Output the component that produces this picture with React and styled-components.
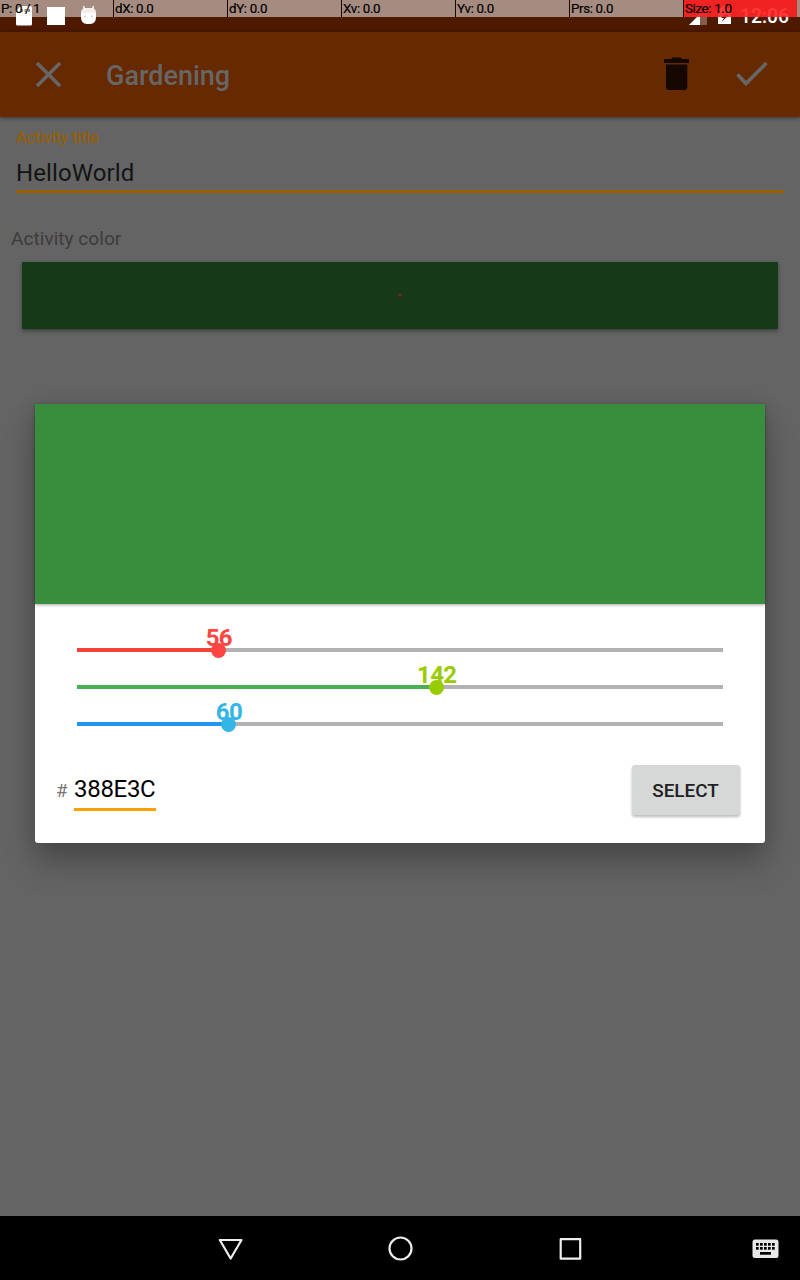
import React from 'react';
import styled, { createGlobalStyle } from 'styled-components';

const Global = createGlobalStyle`
  *, *::before, *::after { box-sizing: border-box; }
  body { margin: 0; background: #646464; font-family: Roboto, sans-serif; }
  svg { display: block; flex: none; }
`;

const Screen = styled.div`
  position: relative;
  display: flex;
  flex-direction: column;
  width: 800px;
  height: 1280px;
  overflow: hidden;
  background: #646464;
`;

const PointerBar = styled.div`
  position: absolute;
  inset: 0 0 auto 0;
  z-index: 3;
  display: flex;
  height: 17px;
  background: linear-gradient(to right, rgba(255, 255, 255, 0.5) 684px, transparent 684px, transparent 797px, rgba(255, 255, 255, 0.5) 797px);
`;

const PointerCell = styled.div`
  width: ${(p) => (p.$first ? 113 : 114)}px;
  padding-left: 1px;
  border-left: ${(p) => (p.$first ? 0 : 1)}px solid #1a0800;
  background: ${(p) => (p.$hot ? 'rgba(255, 36, 36, 0.91)' : 'transparent')};
  background-clip: padding-box;
  color: #000;
  font-size: 13.33px;
  line-height: 17px;
  letter-spacing: -0.35px;
  -webkit-text-stroke: 0.2px #000;
  white-space: pre;
`;

const StatusBar = styled.div`
  display: flex;
  justify-content: space-between;
  flex: none;
  height: 32px;
  padding: 0 11px 0 16px;
  background: #4d1900;
`;

const StatusGroup = styled.div`
  display: flex;
  align-items: flex-start;
`;

const Clock = styled.span`
  margin-left: 7px;
  padding-top: 6px;
  color: #fff;
  font-size: 19.3px;
  font-weight: 500;
  line-height: 22px;
`;

const AppBar = styled.header`
  display: flex;
  align-items: center;
  flex: none;
  height: 85px;
  padding: 0 32px;
  background: #662900;
  box-shadow: 0 1px 4px rgba(0, 0, 0, 0.45);
`;

const Title = styled.h1`
  flex: 1;
  margin: 3px 0 0 42px;
  color: #666;
  font-size: 27px;
  font-weight: 500;
  line-height: 32px;
`;

const TrashIcon = styled.svg`
  margin: 0 0 2px 1px;
`;

const Form = styled.main`
  flex: 1;
  padding: 11px 0 0;
`;

const FieldLabel = styled.div`
  margin-left: 16px;
  color: #996000;
  font-size: 16px;
  line-height: 19px;
  letter-spacing: -0.05px;
  -webkit-text-stroke: 0.2px #996000;
`;

const TitleField = styled.div`
  height: 46px;
  margin: 0 16px;
  padding-top: 12px;
  border-bottom: 3px solid #996000;
  color: #141414;
  font-size: 24px;
  line-height: 29px;
  letter-spacing: 0.1px;
`;

const SectionLabel = styled.div`
  margin: 35px 0 0 11px;
  color: #3c3c3c;
  font-size: 19px;
  line-height: 22px;
  letter-spacing: 0.05px;
`;

const Swatch = styled.div`
  display: flex;
  align-items: center;
  justify-content: center;
  height: 67px;
  margin: 12px 22px 0;
  padding-bottom: 1px;
  background: #163918;
  box-shadow: 0 2px 4px rgba(0, 0, 0, 0.38);
`;

const TouchPoint = styled.span`
  width: 2px;
  height: 2px;
  background: #e00000;
`;

const Dialog = styled.section`
  position: absolute;
  top: 404px;
  left: 35px;
  z-index: 2;
  width: 730px;
  height: 439px;
  border-radius: 0 0 3px 3px;
  background: #fff;
  box-shadow: 0 20px 32px rgba(0, 0, 0, 0.24), 0 4px 22px rgba(0, 0, 0, 0.12);
`;

const Preview = styled.div`
  height: 200px;
  background: #388e3c;
  box-shadow: 0 1px 3px rgba(0, 0, 0, 0.35);
`;

const Sliders = styled.div`
  display: flex;
  flex-direction: column;
  gap: 33px;
  padding: 44px 42px 0;
`;

const Track = styled.div`
  position: relative;
  height: 4px;
  background: linear-gradient(to right, ${(p) => p.$fill} ${(p) => p.$percent}%, #b2b2b2 ${(p) => p.$percent}%);
`;

const Thumb = styled.div`
  position: absolute;
  top: -5px;
  left: ${(p) => p.$percent}%;
  width: 15px;
  height: 15px;
  margin-left: -8px;
  border-radius: 50%;
  background: ${(p) => p.$color};
`;

const Value = styled.span`
  position: absolute;
  bottom: 0;
  left: ${(p) => p.$percent}%;
  transform: translateX(-50%);
  color: ${(p) => p.$color};
  font-size: 24px;
  font-weight: 700;
  line-height: 28px;
  letter-spacing: -0.6px;
`;

const DialogFooter = styled.div`
  display: flex;
  align-items: flex-start;
  padding: 39px 25px 0 21px;
`;

const Hash = styled.span`
  width: 18px;
  padding-top: 15px;
  color: #777;
  font-size: 18.67px;
  line-height: 22px;
`;

const HexField = styled.div`
  width: 82px;
  height: 46px;
  padding-top: 10px;
  border-bottom: 3px solid #ffa000;
  color: #000;
  font-size: 24px;
  line-height: 29px;
  letter-spacing: -0.3px;
`;

const SelectButton = styled.button`
  width: 108px;
  height: 50px;
  margin-left: auto;
  padding: 1px 1px 0 0;
  border: 0;
  border-radius: 3px;
  background: #d6d7d7;
  box-shadow: 0 2px 3px rgba(0, 0, 0, 0.28);
  color: #212121;
  font: 500 18.9px/50px Roboto, sans-serif;
`;

const NavBar = styled.nav`
  display: flex;
  align-items: center;
  flex: none;
  height: 64px;
  padding: 2px 21px 0 218px;
  background: #000;
`;

const NavIcon = styled.svg`
  width: 26px;
  height: 26px;
  margin-right: ${(p) => p.$after}px;
  fill: none;
  stroke: #eee;
  stroke-width: 2.2;
  stroke-linejoin: round;
`;

const KeyboardIcon = styled.svg`
  margin-left: auto;
`;

const pointerCells = ['P: 0 / 1', 'dX: 0.0', 'dY: 0.0', 'Xv: 0.0', 'Yv: 0.0', 'Prs: 0.0', 'Size: 1.0'];

const channels = [
  { value: 56, fill: '#f44336', thumb: '#ff4444' },
  { value: 142, fill: '#4caf50', thumb: '#99cc00' },
  { value: 60, fill: '#2196f3', thumb: '#33b5e5' },
];

function Channel({ value, fill, thumb }) {
  const percent = (value / 255) * 100;
  return (
    <Track $fill={fill} $percent={percent}>
      <Value $color={thumb} $percent={percent}>{value}</Value>
      <Thumb $color={thumb} $percent={percent} />
    </Track>
  );
}

export default function App() {
  return (
    <Screen>
      <Global />
      <PointerBar>
        {pointerCells.map((text, i) => (
          <PointerCell key={text} $first={i === 0} $hot={i === 6}>{text}</PointerCell>
        ))}
      </PointerBar>
      <StatusBar>
        <StatusGroup>
          <svg width="85" height="32" viewBox="0 0 85 32">
            <path fill="#fff" fillRule="evenodd" d="M5 6H14Q16 6 16 8V24Q16 25.500 14.500 25.500H1.500Q0 25.500 0 24V11ZM5 9V12H7V9ZM8.500 9V12H10.500V9ZM12 9V12H14V9Z" />
            <path fill="#fff" d="M31 7H49V25H31Z" />
            <path fill="#fff" d="M65 12H80V17Q80 24 74 24H71Q65 24 65 17Z" />
            <path fill="#e8dfda" d="M65 12Q66 8 69 8H76Q79 8 80 12V13H65Z" />
            <path stroke="#fff" strokeWidth="1.300" d="M67.500 6L68.500 9M77.500 6L76.500 9" />
            <circle cx="69" cy="16.300" r=".9" fill="#a68c80" />
            <circle cx="76" cy="16.300" r=".9" fill="#a68c80" />
          </svg>
        </StatusGroup>
        <StatusGroup>
          <svg width="44" height="32" viewBox="0 0 44 32">
            <path fill="#fff" fillOpacity=".3" d="M18 7V25H0Z" />
            <path fill="#fff" d="M11 14V25H0Z" />
            <path fill="#fff" fillRule="evenodd" d="M33 6H38V8H42V24H29V8H33ZM38 12L32 18H35L32.500 22L40 15H36Z" />
          </svg>
          <Clock>12:06</Clock>
        </StatusGroup>
      </StatusBar>
      <AppBar>
        <svg width="32" height="32" viewBox="0 0 32 32">
          <path stroke="#666" strokeWidth="3.500" d="M5 4L28 27M28 4L5 27" />
        </svg>
        <Title>Gardening</Title>
        <TrashIcon width="26" height="34" viewBox="0 0 26 34">
          <path fill="#140800" d="M0 2H7L8.500 .5H16.500L18 2H25V6H0ZM2 7.500H23.300V29.500Q23.300 33 20.300 33H5Q2 33 2 29.500Z" />
        </TrashIcon>
        <svg width="78" height="34" viewBox="0 0 78 34">
          <path fill="none" stroke="#666" strokeWidth="3.700" d="M47.500 16.500L56 25.500L76.500 5" />
        </svg>
      </AppBar>
      <Form>
        <FieldLabel>Activity title</FieldLabel>
        <TitleField>HelloWorld</TitleField>
        <SectionLabel>Activity color</SectionLabel>
        <Swatch><TouchPoint /></Swatch>
      </Form>
      <NavBar>
        <NavIcon $after={144} viewBox="0 0 26 26"><path d="M1.800 4H23.500L12.650 22.500Z" /></NavIcon>
        <NavIcon $after={144} viewBox="0 0 26 26"><circle cx="12.500" cy="12.500" r="11" /></NavIcon>
        <NavIcon $after={0} viewBox="0 0 26 26"><path d="M2.700 3.200H22.200V22.700H2.700Z" /></NavIcon>
        <KeyboardIcon width="27" height="20" viewBox="0 0 27 20">
          <rect x=".5" y=".5" width="26" height="18.500" rx="2.500" fill="#e8e8e8" />
          {[4, 8].map((y) => [4, 8, 12, 16, 20].map((x) => (
            <rect key={`${x}-${y}`} x={x} y={y} width="2.700" height="2.700" fill="#000" />
          )))}
          <rect x="8" y="13" width="11" height="2.700" fill="#000" />
        </KeyboardIcon>
      </NavBar>
      <Dialog>
        <Preview />
        <Sliders>
          {channels.map((c) => <Channel key={c.value} {...c} />)}
        </Sliders>
        <DialogFooter>
          <Hash>#</Hash>
          <HexField>388E3C</HexField>
          <SelectButton>SELECT</SelectButton>
        </DialogFooter>
      </Dialog>
    </Screen>
  );
}
